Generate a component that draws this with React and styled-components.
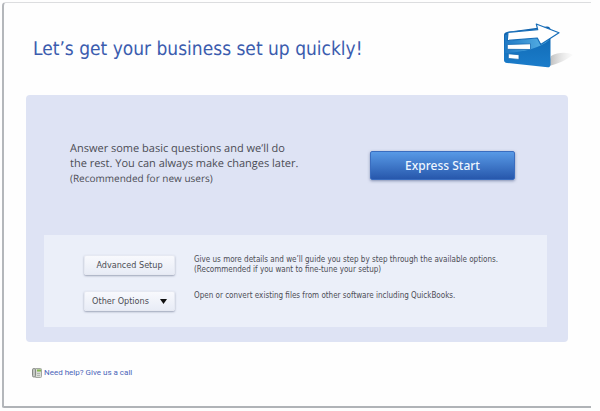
import styled, { createGlobalStyle } from 'styled-components';

const GlobalStyle = createGlobalStyle`
  * {
    box-sizing: border-box;
  }
  body {
    margin: 0;
    background-color: #fefefe;
    font-family: 'DejaVu Sans Condensed', 'DejaVu Sans', Tahoma, sans-serif;
    color: #4c4d55;
  }
`;

const Window = styled.main`
  margin: 2px 9px 0 2px;
  padding-bottom: 24px;
  border-top: 1px solid #dcdddf;
  border-left: 2px solid #b4b7bb;
  border-bottom: 2px solid #b0b3b7;
  border-radius: 4px 0 0 2px;
  background-color: #fefefe;
`;

const Header = styled.header`
  display: flex;
  justify-content: space-between;
  align-items: center;
  height: 92px;
  padding: 0 17px 0 29px;
`;

const Title = styled.h1`
  margin: 0;
  font-size: 19px;
  font-weight: 400;
  line-height: 24px;
  text-rendering: geometricPrecision;
  color: #3b5cae;
`;

const Logo = styled.svg`
  flex: none;
  width: 76px;
  height: 56px;
`;

const Panel = styled.section`
  margin: 0 23px 0 22px;
  padding: 46px 21px 15px 18px;
  border-radius: 4px;
  background-color: #dee3f4;
`;

const ExpressRow = styled.div`
  display: flex;
  justify-content: space-between;
  align-items: flex-start;
  padding: 0 32px 49px 26px;
`;

const Intro = styled.p`
  margin: 0;
  font-family: 'Open Sans', sans-serif;
  font-size: 11px;
  line-height: 15px;
  text-rendering: geometricPrecision;
`;

const Note = styled.small`
  display: block;
  font-size: 10px;
`;

const ExpressButton = styled.button`
  width: 145px;
  height: 29px;
  margin-top: 10px;
  padding: 0;
  border: 1px solid #3a6dbf;
  border-radius: 2px;
  background: linear-gradient(#589ae6, #2757ac);
  box-shadow: 0 1px 3px rgba(40, 60, 110, 0.5);
  font-family: 'Noto Sans', sans-serif;
  font-size: 12px;
  font-weight: 500;
  color: #eef6ff;
`;

const OptionList = styled.div`
  display: flex;
  flex-direction: column;
  gap: 16px;
  padding: 20px 39px 16px 40px;
  background-color: #ebeff9;
`;

const OptionRow = styled.div`
  display: flex;
  align-items: flex-start;
  gap: 19px;
`;

const OptionButton = styled.button`
  display: flex;
  justify-content: center;
  align-items: center;
  gap: 11px;
  flex: none;
  width: 91px;
  height: 20px;
  padding: 0;
  border: 1px solid #e6e9f2;
  border-radius: 2px;
  background: linear-gradient(#f8f9fd, #e8ecf6);
  box-shadow: 0 1px 2px rgba(80, 90, 120, 0.5);
  font-family: inherit;
  font-size: 9px;
  color: #4c4d55;
`;

const Arrow = styled.svg`
  width: 7px;
  height: 5px;
`;

const Description = styled.p`
  margin: 0;
  font-size: 8px;
  line-height: 10px;
`;

const Help = styled.a`
  display: inline-flex;
  align-items: center;
  gap: 2px;
  margin: 26px 0 0 28px;
  font-family: Roboto, sans-serif;
  font-size: 8px;
  line-height: 10px;
  color: #4a64b8;
  text-decoration: none;
`;

const HelpIcon = styled.svg`
  width: 10px;
  height: 10px;
`;

function App() {
  return (
    <>
      <GlobalStyle />
      <Window>
        <Header>
          <Title>Let’s get your business set up quickly!</Title>
          <Logo viewBox="0 0 76 56" aria-hidden="true">
            <defs>
              <linearGradient id="card" x1="0" y1="0" x2="0" y2="1">
                <stop offset="0" stopColor="#0f5ea8" />
                <stop offset="0.5" stopColor="#1471bd" />
                <stop offset="1" stopColor="#1b7cca" />
              </linearGradient>
              <linearGradient id="shine" x1="0" y1="0" x2="1" y2="0">
                <stop offset="0" stopColor="#2079c4" />
                <stop offset="1" stopColor="#5cb6e8" />
              </linearGradient>
              <linearGradient id="shade" x1="0" y1="0" x2="1" y2="0">
                <stop offset="0" stopColor="#999" stopOpacity="0.7" />
                <stop offset="1" stopColor="#ddd" stopOpacity="0.1" />
              </linearGradient>
            </defs>
            <path d="M50 45L53 35C60 31 70 31 75 34C68 39 60 43 50 45Z" fill="url(#shade)" />
            <path
              d="M6 14Q6 11.5 9 11L49 5.5Q52.5 5.5 52.5 9V43.5Q52.5 46.5 49.5 46.3L9 42Q6 41.5 6 39Z"
              fill="url(#card)"
            />
            <path d="M7 14L51 8V19C42 27 27 31 7 32Z" fill="url(#shine)" />
            <path
              d="M10 11.3L39.7 8.6L38.3 3L61 11.8L42.7 23.5L39.3 17L9.3 19.5Z"
              fill="#fff"
              stroke="#176eb9"
              strokeWidth="1.2"
              strokeLinejoin="round"
            />
            <path
              d="M9.3 23.5L32.5 22.8V28.5L9.3 28.3ZM10.3 32.8L21 33.7V38.4L10.3 37.5Z"
              fill="#fff"
              stroke="#1267b0"
              strokeWidth="0.8"
            />
          </Logo>
        </Header>
        <Panel>
          <ExpressRow>
            <Intro>
              Answer some basic questions and we’ll do
              <br />
              the rest. You can always make changes later.
              <Note>(Recommended for new users)</Note>
            </Intro>
            <ExpressButton type="button">Express Start</ExpressButton>
          </ExpressRow>
          <OptionList>
            <OptionRow>
              <OptionButton type="button">Advanced Setup</OptionButton>
              <Description>
                Give us more details and we’ll guide you step by step through the available options.
                <br />
                (Recommended if you want to fine-tune your setup)
              </Description>
            </OptionRow>
            <OptionRow>
              <OptionButton type="button" aria-haspopup="menu">
                Other Options
                <Arrow viewBox="0 0 7 5" aria-hidden="true">
                  <path d="M0 0H7L3.5 5Z" fill="#111" />
                </Arrow>
              </OptionButton>
              <Description>
                Open or convert existing files from other software including QuickBooks.
              </Description>
            </OptionRow>
          </OptionList>
        </Panel>
        <Help href="#help">
          <HelpIcon viewBox="0 0 10 10" aria-hidden="true">
            <rect x="3" y="0.5" width="6.5" height="9" rx="1" fill="#d9dcd6" stroke="#a3a7a1" />
            <rect x="0.5" y="0.5" width="3" height="8.5" rx="1.3" fill="#c3c7c2" stroke="#858984" />
            <path d="M5 1.5H9V3.5H5Z" fill="#83b84e" />
            <path d="M5 5.5H8M5 7.5H8" stroke="#a5a9a3" strokeWidth="0.8" />
          </HelpIcon>
          Need help? Give us a call
        </Help>
      </Window>
    </>
  );
}

export default App;
